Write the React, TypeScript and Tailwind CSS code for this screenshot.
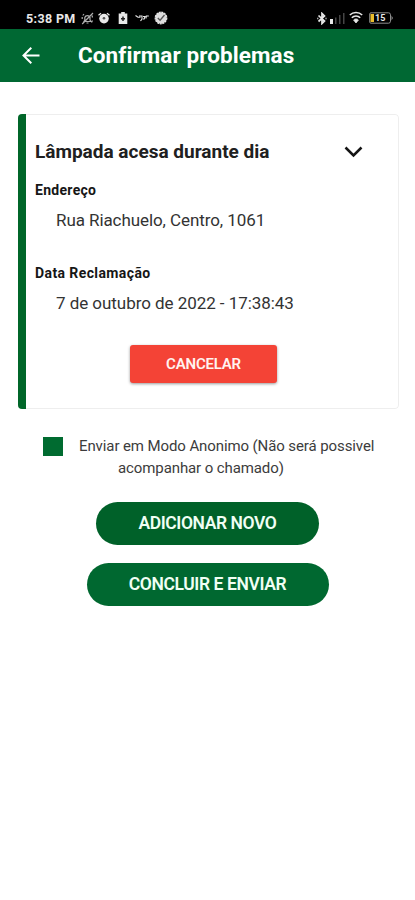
import React from 'react';

interface FieldProps {
  label: string;
  value: string;
  labelClass: string;
  valueClass: string;
}

const StatusBar: React.FC = () => (
  <div className="h-[29px] bg-black flex items-start text-[#e8e8e8] pl-[26px] pt-[10px]">
    <span className="text-[12.5px] leading-[18px] font-bold w-[55px] whitespace-nowrap tracking-[0.35px]">5:38 PM</span>

    {/* Muted bell */}
    <svg className="w-[13px] h-[13px] mt-[2px] opacity-75" viewBox="0 0 13 13" fill="none" stroke="currentColor" strokeWidth="1.2">
      <path d="M3 9.5h7L9 8V5.5a2.7 2.7 0 0 0-5.2 0V8L3 9.5zM1.2 12 12 1M5.5 11h2M1.8 3.5 3 2M11.5 8.5l-1 2M1.2 7V5M11 3.5l.5 2" />
    </svg>
    {/* Alarm */}
    <svg className="w-[12px] h-[12px] mt-[2px] ml-[4px]" viewBox="0 0 12 12">
      <path d="M.5 3.2 3 1.2M11.5 3.2 9 1.2" stroke="currentColor" strokeWidth="1.3" />
      <circle cx="6" cy="6.6" r="4.8" fill="currentColor" />
      <circle cx="6" cy="6.3" r="1.3" fill="#555" />
    </svg>
    {/* Battery saver */}
    <svg className="w-[10px] h-[12px] mt-[2px] ml-[8px]" viewBox="0 0 10 12">
      <path d="M3.2 0h3.6v1.5H9.3V12H.7V1.5h2.5z" fill="currentColor" />
      <path d="M5 4.5v4.5M3 6.8h4" stroke="#222" strokeWidth="1.5" />
    </svg>
    <svg className="w-[14px] h-[9px] mt-[3px] ml-[7px]" viewBox="0 0 14 9" fill="none" stroke="currentColor" strokeWidth="1.1">
      <path d="M.5 2.5 3 4.2h2.5M4 3h3v3L5.5 8M8 3.5h2L9.2 6H8M11 5.5l.3-2.5h2.5" />
    </svg>
    {/* Verified */}
    <svg className="w-[14px] h-[14px] mt-[1px] ml-[5px]" viewBox="0 0 14 14">
      <circle cx="7" cy="7" r="5.8" fill="#ddd" stroke="currentColor" strokeWidth="1.2" strokeDasharray="2 .7" />
      <path d="m3.8 7 2.3 2.2L10.5 4" fill="none" stroke="#555" strokeWidth="1.3" />
    </svg>

    {/* Bluetooth */}
    <svg className="w-[10px] h-[13px] mt-[2px] ml-[149px]" viewBox="0 0 10 13" fill="none" stroke="currentColor" strokeWidth="1.7">
      <path d="m1.5 3.5 6 5.6L5 11.5v-10L7.5 4l-6 5.5" />
      <path d="M9 5.7v1.6M.8 5.7v1.6" strokeWidth="1" />
    </svg>
    {/* Signal */}
    <svg className="w-[15px] h-[12px] mt-[2px] ml-[3px]" viewBox="0 0 15 12">
      <path d="M0 7h3v5H0z" fill="#e8e8e8" />
      <path d="M5 5.5h1.5V12H5zM9 3h1.5v9H9zM13 1h1.5v11H13z" fill="#454545" />
    </svg>
    {/* Wifi */}
    <svg className="w-[14px] h-[13px] mt-[1px] ml-[4px]" viewBox="0 0 14 13" fill="none" stroke="currentColor" strokeWidth="1.6">
      <path d="M.8 4a9 9 0 0 1 12.4 0M2.8 6.8a5.8 5.8 0 0 1 8.4 0" />
      <path d="m4.6 9 2.4 3 2.4-3a3.2 3.2 0 0 0-4.8 0z" fill="currentColor" strokeWidth=".8" />
    </svg>
    {/* Battery */}
    <div className="relative w-[25px] h-[12px] ml-[6px] mt-[2px]">
      <svg className="w-[25px] h-[12px]" viewBox="0 0 25 12">
        <path d="M2 .8h17.5q2 0 2 2v6.4q0 2-2 2H2Q.7 11.2.7 10V2Q.7.8 2 .8z" fill="none" stroke="#8c8c8c" />
        <path d="M22.5 3.5 24 6l-1.5 2.5z" fill="#8c8c8c" />
        <path d="M1.5 2H5v8H1.5z" fill="#e9bd2c" />
      </svg>
      <span className="absolute left-[6px] top-0 text-[9px] leading-[12px] font-bold">15</span>
    </div>
  </div>
);

const Field: React.FC<FieldProps> = ({ label, value, labelClass, valueClass }) => (
  <div className="h-[83px]">
    <div className={`text-[14px] leading-[18px] font-bold text-[#161616] ${labelClass}`}>{label}</div>
    <div className={`pl-[21px] mt-[10px] text-[17px] leading-[22px] text-[#333] whitespace-nowrap ${valueClass}`}>{value}</div>
  </div>
);

export default function App() {
  return (
    <div className="w-[415px] h-[900px] bg-white overflow-hidden font-['Roboto',sans-serif]">
      <StatusBar />

      <header className="h-[53px] bg-[#006833] flex items-center text-white pl-[22px]">
        <svg className="w-[18px] h-[17px]" viewBox="0 0 18 17" fill="none" stroke="currentColor" strokeWidth="2">
          <path d="M17.5 8.5H2M9.3.8 1.5 8.5l7.8 7.7" />
        </svg>
        <h1 className="ml-[38px] -mt-[2px] text-[22.5px] leading-[28px] font-bold whitespace-nowrap tracking-[0.08px]">Confirmar problemas</h1>
      </header>

      <main className="pt-[32px] flex flex-col items-center">
        <section className="w-[381px] h-[295px] -mr-[2px] rounded-[4px] flex overflow-hidden">
          <div className="w-[8px] bg-[#006629]"></div>
          <div className="flex-1 pl-[9px] pt-[25px] border border-l-0 border-[#eeeeee] rounded-r-[4px]">
            <div className="flex items-center justify-between pr-[35px] h-[24px]">
              <h2 className="text-[19px] leading-[24px] font-bold text-[#202020] whitespace-nowrap">Lâmpada acesa durante dia</h2>
              <svg className="w-[19px] h-[12px]" viewBox="0 0 19 12" fill="none" stroke="#151515" strokeWidth="2.5">
                <path d="m1.5 1.5 8 8 8-8" />
              </svg>
            </div>
            <div className="mt-[17px]">
              <Field label="Endereço" value="Rua Riachuelo, Centro, 1061" labelClass="tracking-[0.3px]" valueClass="tracking-[-0.08px]" />
              <Field label="Data Reclamação" value="7 de outubro de 2022 - 17:38:43" labelClass="tracking-[0.4px]" valueClass="tracking-[-0.05px]" />
            </div>
            <button className="block ml-[95px] -mt-[2px] w-[147px] h-[38px] rounded-[3px] bg-[#f44336] text-[#fff3f0] text-[15px] font-semibold tracking-[-0.2px] shadow-[0_1px_3px_rgba(0,0,0,0.4)]">
              CANCELAR
            </button>
          </div>
        </section>

        <div className="w-full flex pl-[43px] mt-[26px]">
          <div className="w-[20px] h-[19px] mt-[2px] bg-[#006b30]"></div>
          <p className="ml-[16px] text-[15px] leading-[22px] text-[#3c3c3c] tracking-[-0.1px] whitespace-nowrap">
            Enviar em Modo Anonimo (Não será possivel
            <span className="block pl-[39px]">acompanhar o chamado)</span>
          </p>
        </div>

        <button className="mt-[23px] pb-px w-[223px] h-[43px] rounded-full bg-[#006129] text-[#f0fff4] text-[17.5px] leading-[22px] font-semibold tracking-[-0.42px]">ADICIONAR NOVO</button>
        <button className="mt-[18px] pb-px w-[242px] h-[43px] rounded-full bg-[#006830] text-[#f0fff4] text-[17.5px] leading-[22px] font-semibold tracking-[-0.4px]">CONCLUIR E ENVIAR</button>
      </main>
    </div>
  );
}
